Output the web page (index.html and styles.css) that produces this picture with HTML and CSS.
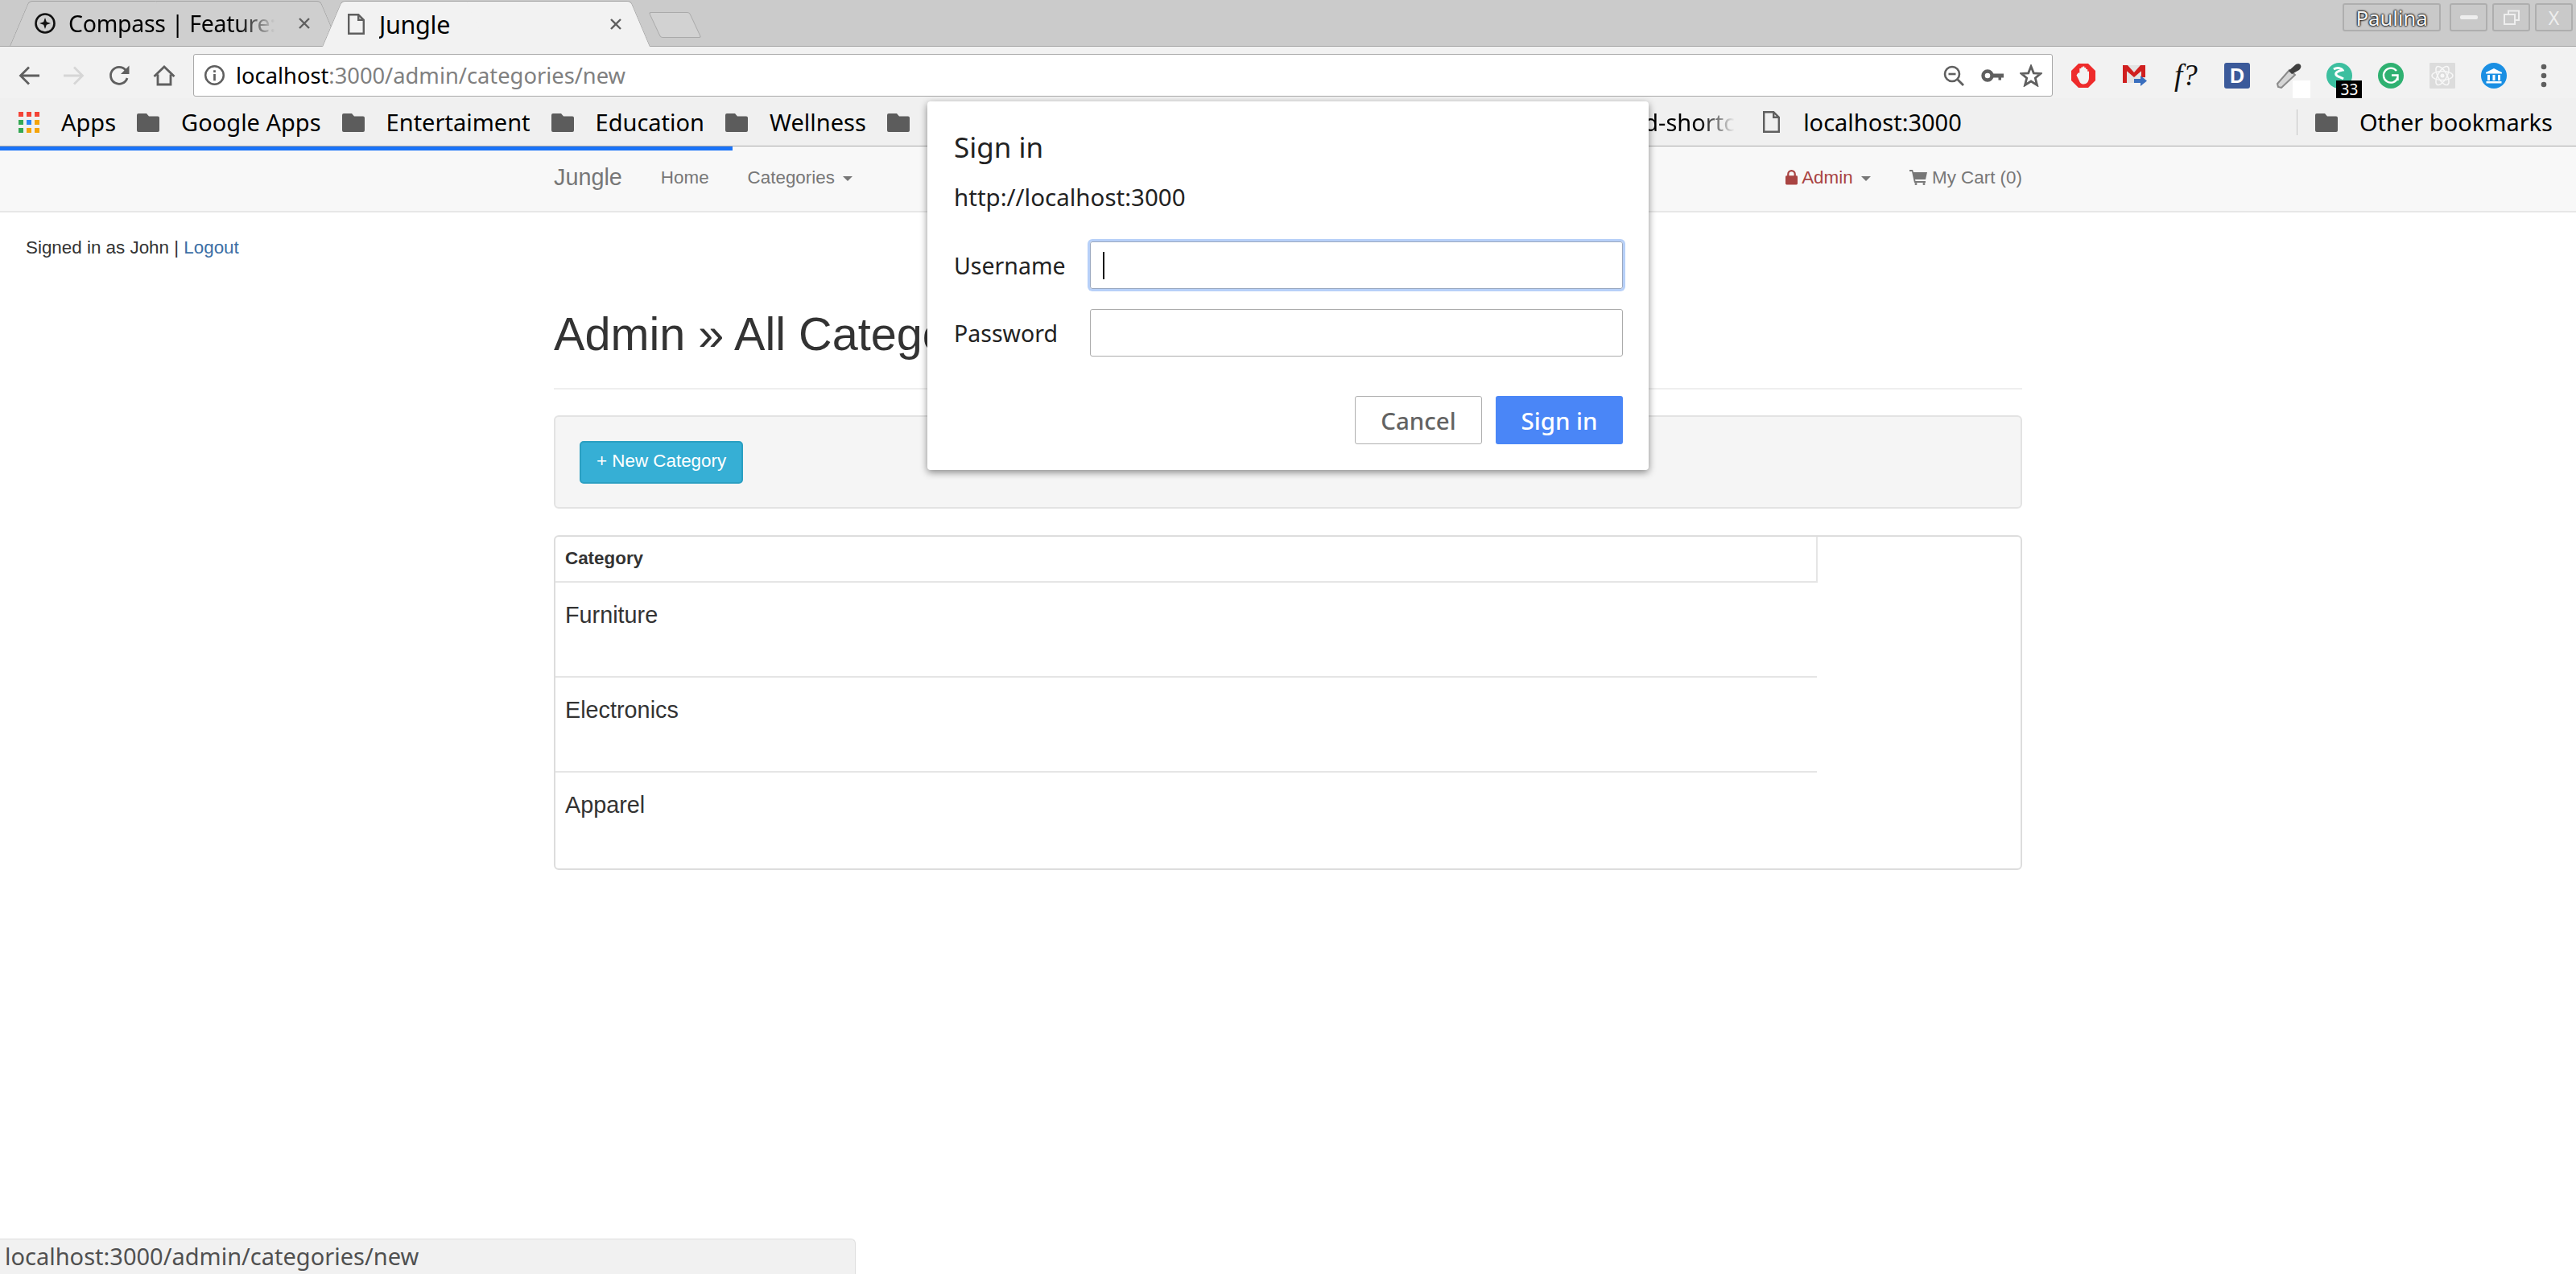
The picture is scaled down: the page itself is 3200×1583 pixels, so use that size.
FILE: index.html
```html
<!DOCTYPE html>
<html lang="en">
    <head>
        <meta charset="UTF-8" />
        <title>Jungle</title>
        <link rel="stylesheet" href="styles.css">
    </head>
    <body>
        <svg class="sprite">
            <symbol id="folder" viewBox="0 0 28 24"><path d="M2 1h10l3 3.500h11a2 2 0 0 1 2 2V22a2 2 0 0 1-2 2H2a2 2 0 0 1-2-2V3a2 2 0 0 1 2-2z" fill="#5c5c5c"/></symbol>
            <symbol id="close" viewBox="0 0 14 14"><path d="M1 1l12 12M13 1L1 13" stroke="#5f5f5f" stroke-width="2.400"/></symbol>
        </svg>

        <div class="tabstrip">
            <div class="tab tab-bg">
                <svg class="tab-icon" viewBox="0 0 26 26"><circle cx="13" cy="13" r="11.500" fill="none" stroke="#111" stroke-width="2.600"/><path d="M13 6l1.800 5.200L20 13l-5.200 1.800L13 20l-1.800-5.200L6 13l5.200-1.800z" fill="#111"/></svg>
                <span class="tab-title tab-fade">Compass | Feature:</span>
                <svg class="tab-close"><use href="#close"/></svg>
            </div>
            <div class="tab tab-active">
                <svg class="tab-icon tab-page" viewBox="0 0 21 26"><path d="M1.200 1.200h12l6.600 6.600v17H1.200z M13.200 1.200v6.600h6.600" fill="none" stroke="#5f5f5f" stroke-width="2.400"/></svg>
                <span class="tab-title tab-title-active">Jungle</span>
                <svg class="tab-close"><use href="#close"/></svg>
            </div>
            <div class="tab-new"></div>
            <div class="window-btns">
                <div class="win-btn win-user">Paulina</div>
                <div class="win-btn win-small"><span class="win-min"></span></div>
                <div class="win-btn win-small"><svg width="22" height="20" viewBox="0 0 22 20"><path d="M7 5V1.500h13V13h-4M2 6h13v12H2z" fill="none" stroke="#eee" stroke-width="2"/></svg></div>
                <div class="win-btn win-small win-x">X</div>
            </div>
        </div>

        <div class="toolbar">
            <svg class="nav-icon" viewBox="0 0 28 28"><path d="M27 14H4M14 3.500L3.500 14 14 24.500" fill="none" stroke="#5f5f5f" stroke-width="2.800"/></svg>
            <svg class="nav-icon" viewBox="0 0 28 28"><path d="M1 14h23M14 3.500L24.500 14 14 24.500" fill="none" stroke="#d6d6d6" stroke-width="2.800"/></svg>
            <svg class="nav-icon" viewBox="0 0 28 28"><path d="M24 17a10.500 10.500 0 1 1-2-10" fill="none" stroke="#5f5f5f" stroke-width="2.800"/><path d="M26.500 1.500V12H16z" fill="#5f5f5f"/></svg>
            <svg class="nav-icon" viewBox="0 0 28 28"><path d="M1.500 15L14 3l12.500 12M6 12.500V25h16V12.500" fill="none" stroke="#5f5f5f" stroke-width="2.800"/></svg>
            <div class="omnibox">
                <svg class="omni-info" viewBox="0 0 28 28"><circle cx="14" cy="14" r="11.700" fill="none" stroke="#5f5f5f" stroke-width="2.600"/><path d="M12.600 7.500h2.800v2.800h-2.800zM12.600 12.500h2.800v8.500h-2.800z" fill="#5f5f5f"/></svg>
                <span class="omni-url">localhost<span class="omni-path">:3000/admin/categories/new</span></span>
                <svg class="omni-icon" viewBox="0 0 28 28"><circle cx="12" cy="12" r="9" fill="none" stroke="#5f5f5f" stroke-width="2.600"/><path d="M7.500 12h9" stroke="#5f5f5f" stroke-width="2.600"/><path d="M18.500 18.500l7.500 7.500" stroke="#5f5f5f" stroke-width="2.800"/></svg>
                <svg class="omni-icon" viewBox="0 0 28 28"><circle cx="8" cy="14" r="5.500" fill="none" stroke="#5f5f5f" stroke-width="4.400"/><path d="M13 11.500h15v5h-3v3h-3.500v-3H13z" fill="#5f5f5f"/></svg>
                <svg class="omni-icon" viewBox="0 0 28 28"><path d="M14 2.500l3.300 8.300 8.700.6-6.700 5.600 2.200 8.700L14 21l-7.500 4.700 2.200-8.700L2 11.400l8.700-.6z" fill="none" stroke="#5f5f5f" stroke-width="2.800"/></svg>
            </div>
            <div class="extensions">
                <svg class="ext" viewBox="0 0 32 32"><path d="M10 1h12l9 9v12l-9 9H10l-9-9V10z" fill="#ee2b2b"/><path d="M9.500 12.500h1.800V7h2V5.500h2V4.500h2V6h2v2h1.800l.4 3 1.500-.5v8c0 5-3 8-6.500 8s-5-2-6-5l-3-6z" fill="#f2f2f2"/></svg>
                <svg class="ext" viewBox="0 0 32 32"><path d="M1 3h28v22H1z" fill="#e3e3e3"/><path d="M1 3h5v22H1zM24 3h5v15h-5zM1 3h6l8 9 8-9h6v3L15 18 1 6z" fill="#d01f1f"/><path d="M15 20h8v-4l8 6.500-8 6.500v-4h-8z" fill="#3a6fbf"/></svg>
                <span class="ext ext-f">f?</span>
                <span class="ext ext-d">D</span>
                <div class="ext ext-dropper">
                    <svg viewBox="0 0 32 32"><path d="M3 30l-1-4L17 9l7 6L7 31z" fill="#d5d5d5" stroke="#8a8a8a" stroke-width="2"/><path d="M20 14l-4-4 9-8c2-1 5-1 6 1s0 4-2 6z" fill="#3f3f3f"/></svg>
                    <span class="dropper-badge"></span>
                </div>
                <div class="ext ext-s">
                    <svg viewBox="0 0 32 32"><circle cx="16" cy="16" r="16" fill="#3cbf9f"/><path d="M9 8c5-3 10-1 11 1-7 1-9 4-8 6s6 3 9 5" fill="none" stroke="#fff" stroke-width="3"/></svg>
                    <span class="count-badge">33</span>
                </div>
                <svg class="ext" viewBox="0 0 32 32"><circle cx="16" cy="16" r="16" fill="#2fb171"/><path d="M23 10a9 9 0 1 0 1.500 8.500M17 15.500h7.500V22" fill="none" stroke="#fff" stroke-width="2.400"/></svg>
                <svg class="ext" viewBox="0 0 32 32"><rect width="32" height="32" rx="1" fill="#dcdcdc"/><g fill="none" stroke="#f7f7f7" stroke-width="1.500"><ellipse cx="16" cy="16" rx="13" ry="5.500"/><ellipse cx="16" cy="16" rx="13" ry="5.500" transform="rotate(60 16 16)"/><ellipse cx="16" cy="16" rx="13" ry="5.500" transform="rotate(120 16 16)"/></g><circle cx="16" cy="16" r="2.500" fill="#f7f7f7"/></svg>
                <svg class="ext" viewBox="0 0 32 32"><circle cx="16" cy="16" r="16" fill="#1a8fe3"/><path d="M16 7l10 5v1.500H6V12zM8 15h3v7H8zM14.500 15h3v7h-3zM21 15h3v7h-3zM6.500 23h19v2.500h-19z" fill="#fff"/></svg>
                <svg class="ext-menu" viewBox="0 0 8 32"><circle cx="4" cy="5" r="3.300" fill="#5f5f5f"/><circle cx="4" cy="16" r="3.300" fill="#5f5f5f"/><circle cx="4" cy="27" r="3.300" fill="#5f5f5f"/></svg>
            </div>
        </div>

        <div class="bookmarks">
            <div class="bm">
                <div class="apps-grid">
                    <i class="c-r"></i><i class="c-r"></i><i class="c-r"></i>
                    <i class="c-g"></i><i class="c-b"></i><i class="c-y"></i>
                    <i class="c-g"></i><i class="c-y"></i><i class="c-y"></i>
                </div>
                <span>Apps</span>
            </div>
            <div class="bm"><svg class="folder"><use href="#folder"/></svg><span>Google Apps</span></div>
            <div class="bm"><svg class="folder"><use href="#folder"/></svg><span>Entertaiment</span></div>
            <div class="bm"><svg class="folder"><use href="#folder"/></svg><span>Education</span></div>
            <div class="bm"><svg class="folder"><use href="#folder"/></svg><span>Wellness</span></div>
            <div class="bm bm-hidden"><svg class="folder"><use href="#folder"/></svg></div>
            <div class="bm bm-cut"><span class="bm-fade">rd-shortc</span></div>
            <div class="bm"><svg class="bm-page" viewBox="0 0 21 27"><path d="M1.200 1.200h12l6.600 6.600v18H1.200z M13.200 1.200v6.600h6.600" fill="none" stroke="#5f5f5f" stroke-width="2.400"/></svg><span>localhost:3000</span></div>
            <div class="bm bm-other"><svg class="folder"><use href="#folder"/></svg><span>Other bookmarks</span></div>
        </div>

        <div class="progress"></div>

        <nav class="navbar">
            <div class="container nav-inner">
                <a class="brand">Jungle</a>
                <a class="nav-link nav-home">Home</a>
                <a class="nav-link">Categories <span class="caret"></span></a>
                <div class="nav-right">
                    <a class="nav-link nav-admin"><svg class="nav-glyph" viewBox="0 0 16 20"><path d="M3.500 9V6a4.500 4.500 0 0 1 9 0v3" fill="none" stroke="#a94442" stroke-width="2.400"/><rect y="8" width="16" height="12" rx="1.500" fill="#a94442"/></svg> Admin <span class="caret"></span></a>
                    <a class="nav-link"><svg class="nav-glyph nav-cart" viewBox="0 0 22 20"><path d="M0 1h4l1 3h17l-2 9H7l.5 2H20v2H6L3 3H0z" fill="#777"/><circle cx="8" cy="18.500" r="1.500" fill="#777"/><circle cx="18" cy="18.500" r="1.500" fill="#777"/></svg> My Cart (0)</a>
                </div>
            </div>
        </nav>

        <p class="signed">Signed in as John | <a class="logout">Logout</a></p>

        <main class="container">
            <h1 class="page-title">Admin » All Categories</h1>
            <div class="well"><a class="btn-info">+ New Category</a></div>
            <div class="panel">
                <table class="cat-table">
                    <thead><tr><th>Category</th></tr></thead>
                    <tbody>
                        <tr><td>Furniture</td></tr>
                        <tr><td>Electronics</td></tr>
                        <tr><td>Apparel</td></tr>
                    </tbody>
                </table>
            </div>
        </main>

        <div class="status">localhost:3000/admin/categories/new</div>

        <div class="dialog">
            <div class="dialog-title">Sign in</div>
            <div class="dialog-origin">http://localhost:3000</div>
            <div class="dialog-row">
                <label class="dialog-label">Username</label>
                <div class="field field-focus"><span class="cursor"></span></div>
            </div>
            <div class="dialog-row">
                <label class="dialog-label">Password</label>
                <div class="field"></div>
            </div>
            <div class="dialog-actions">
                <button class="dlg-btn dlg-cancel">Cancel</button>
                <button class="dlg-btn dlg-ok">Sign in</button>
            </div>
        </div>
    </body>
</html>
```

FILE: styles.css
```css
html,
body {
    margin: 0;
    height: 1583px;
    overflow: hidden;
    background-color: #fff;
}

body {
    font-family: "Liberation Sans", Arial, sans-serif;
    font-size: 22.4px;
    color: #333;
    position: relative;
}

.sprite {
    display: none;
}

/* browser chrome */
.tabstrip {
    height: 57px;
    background-color: #cbcbcb;
    border-bottom: 1px solid #a3a3a3;
    display: flex;
    align-items: flex-end;
    font-family: "Noto Sans", sans-serif;
    color: #000;
    padding-left: 12px;
}

.tab {
    height: 56px;
    display: flex;
    align-items: center;
    box-sizing: border-box;
    position: relative;
    z-index: 1;
    flex: none;
}

/* slanted tab sides */
.tab::before,
.tab::after {
    content: "";
    position: absolute;
    top: 0;
    bottom: 0;
    z-index: -1;
    box-sizing: border-box;
    border-top: 1px solid #a3a3a3;
}

.tab::before {
    left: 0;
    width: 50%;
    border-left: 1px solid #a3a3a3;
    border-top-left-radius: 5px;
    transform-origin: bottom left;
    transform: skewX(-23deg);
}

.tab::after {
    right: 0;
    width: 50%;
    border-right: 1px solid #a3a3a3;
    border-top-right-radius: 5px;
    transform-origin: bottom right;
    transform: skewX(23deg);
}

.tab-bg {
    width: 409px;
    padding: 0 36px 0 31px;
}

.tab-bg::before,
.tab-bg::after {
    background-color: #cfcfcf;
}

.tab-active {
    width: 407px;
    height: 57px;
    margin-left: -21px;
    margin-bottom: -1px;
    padding: 0 35px 0 32px;
    z-index: 2;
}

.tab-active::before,
.tab-active::after {
    background-color: #f2f2f2;
}

.tab-icon {
    width: 26px;
    height: 26px;
    flex: none;
    margin-right: 16px;
}

.tab-page {
    width: 21px;
    margin-right: 18px;
}

.tab-title {
    font-size: 28.500px;
    letter-spacing: -0.3px;
    flex: 1;
    white-space: nowrap;
    overflow: hidden;
}

.tab-title-active {
    font-size: 30.500px;
}

.tab-fade {
    -webkit-mask-image: linear-gradient(to right, #000 78%, transparent 95%);
    mask-image: linear-gradient(to right, #000 78%, transparent 95%);
}

.tab-close {
    width: 14px;
    height: 14px;
    flex: none;
    margin-left: 16px;
}

.tab-new {
    width: 51px;
    height: 32px;
    box-sizing: border-box;
    margin: 0 0 10px 6px;
    background-color: #d2d2d2;
    border: 1px solid #aaa;
    border-radius: 3px;
    transform: skewX(25deg);
}

.window-btns {
    margin-left: auto;
    margin-right: 4px;
    align-self: flex-start;
    margin-top: 4px;
    display: flex;
    gap: 6px;
}

.win-btn {
    height: 35px;
    box-sizing: border-box;
    border: 2px solid #aeaeae;
    border-radius: 3px;
    background-color: #c9c9c9;
    display: flex;
    align-items: center;
    justify-content: center;
    color: #fff;
}

.win-user {
    width: 122px;
    margin-right: 5px;
    font-family: "Noto Sans", sans-serif;
    font-size: 26px;
    letter-spacing: -0.2px;
    color: #f4f4f4;
    text-shadow: 0 0 2px #000, 0 0 2px #000, 0 0 3px #000;
}

.win-small {
    width: 47px;
}

.win-min {
    width: 22px;
    height: 5px;
    background-color: #eee;
    border-radius: 2px;
}

.win-x {
    font-size: 23px;
    color: #eee;
}

.toolbar {
    height: 64px;
    box-sizing: border-box;
    background-color: #f2f2f2;
    display: flex;
    align-items: center;
    padding: 7px 0 0 22px;
    font-family: "Noto Sans", sans-serif;
}

.nav-icon {
    width: 28px;
    height: 28px;
    margin-right: 28px;
    flex: none;
}

.omnibox {
    width: 2310px;
    height: 53px;
    margin-left: -6px;
    box-sizing: border-box;
    background-color: #fff;
    border: 1px solid #a9a9a9;
    border-radius: 3px;
    display: flex;
    align-items: center;
    padding: 0 12px;
    flex: none;
}

.omni-info {
    width: 27px;
    height: 27px;
    margin-right: 13px;
    flex: none;
}

.omni-url {
    font-size: 27.300px;
    color: #000;
    flex: 1;
}

.omni-path {
    color: #808080;
}

.omni-icon {
    width: 28px;
    height: 28px;
    margin-left: 20px;
    flex: none;
}

.extensions {
    display: flex;
    align-items: center;
    margin-left: 22px;
    gap: 31.700px;
}

.ext {
    width: 32px;
    height: 32px;
    flex: none;
    display: block;
}

.ext-f {
    font-family: "Liberation Serif", serif;
    font-style: italic;
    font-size: 37px;
    line-height: 32px;
    color: #111;
    text-align: center;
}

.ext-d {
    background-color: #3b5a9a;
    color: #fff;
    font-family: "Liberation Sans", sans-serif;
    font-weight: bold;
    font-size: 25px;
    line-height: 32px;
    text-align: center;
    border-radius: 3px;
}

.ext-dropper,
.ext-s {
    position: relative;
}

.dropper-badge {
    position: absolute;
    left: 21px;
    top: 22px;
    width: 22px;
    height: 22px;
    background-color: #fff;
}

.count-badge {
    position: absolute;
    left: 12px;
    top: 22px;
    width: 32px;
    height: 22px;
    background-color: #000;
    color: #fff;
    font-size: 19px;
    line-height: 22px;
    text-align: center;
}

.ext-menu {
    width: 8px;
    height: 32px;
    margin-left: 11px;
    flex: none;
}

.bookmarks {
    height: 60px;
    box-sizing: border-box;
    background-color: #f0f0f0;
    border-bottom: 1px solid #a9a9a9;
    display: flex;
    align-items: center;
    padding-left: 23px;
    font-family: "Noto Sans", sans-serif;
    font-size: 29px;
    color: #000;
}

.bm {
    display: flex;
    align-items: center;
    white-space: nowrap;
    margin-right: 26px;
}

.apps-grid {
    display: grid;
    grid-template-columns: repeat(3, 6px);
    grid-auto-rows: 6px;
    gap: 4px;
    margin-right: 27px;
}

.apps-grid i {
    display: block;
}

.c-r {
    background-color: #f44336;
}

.c-g {
    background-color: #34a853;
}

.c-b {
    background-color: #2a85f5;
}

.c-y {
    background-color: #f4a40b;
}

.folder {
    width: 28px;
    height: 24px;
    margin-right: 27px;
    flex: none;
}

.bm-page {
    width: 21px;
    height: 27px;
    margin-right: 29px;
}

.bm-hidden {
    width: 28px;
}

.bm-cut {
    margin-left: 875px;
    margin-right: 35px;
}

.bm-fade {
    -webkit-mask-image: linear-gradient(to right, #000 65%, transparent 100%);
    mask-image: linear-gradient(to right, #000 65%, transparent 100%);
}

.bm-other {
    margin-left: auto;
    margin-right: 29px;
    height: 32px;
    padding-left: 22px;
    border-left: 1px solid #c4c4c4;
}

.progress {
    width: 910px;
    height: 5px;
    margin-bottom: -5px;
    background-color: #1a73f8;
    position: relative;
}

/* page */
.container {
    width: 1824px;
    margin: 0 auto;
}

.navbar {
    height: 82px;
    box-sizing: border-box;
    background-color: #f8f8f8;
    border-bottom: 2px solid #e7e7e7;
}

.nav-inner {
    height: 77px;
    display: flex;
    align-items: center;
}

.brand {
    font-size: 28.800px;
    color: #777;
    margin-right: 48px;
}

.nav-link {
    color: #777;
    font-size: 22.400px;
    white-space: nowrap;
}

.nav-home {
    margin-right: 48px;
}

.nav-right {
    margin-left: auto;
    display: flex;
    gap: 48px;
}

.nav-admin {
    color: #a94442;
}

.nav-glyph {
    width: 15px;
    height: 20px;
    vertical-align: -2px;
}

.nav-cart {
    width: 22px;
}

.caret {
    display: inline-block;
    vertical-align: middle;
    border-top: 6.400px solid #777;
    border-left: 6.400px solid transparent;
    border-right: 6.400px solid transparent;
    margin-left: 4px;
}

.signed {
    margin: 0;
    padding: 28px 32px 0;
    line-height: 32px;
    color: #333;
}

.logout {
    color: #3b6ea5;
}

.page-title {
    margin: 60px 0 32px;
    padding-bottom: 35px;
    font-size: 57.600px;
    font-weight: 500;
    line-height: 63px;
    color: #333;
    border-bottom: 2px solid #eee;
}

.well {
    height: 116px;
    box-sizing: border-box;
    background-color: #f5f5f5;
    border: 2px solid #e3e3e3;
    border-radius: 6px;
    padding: 30px;
    margin-bottom: 33px;
}

.btn-info {
    display: inline-block;
    background-color: #36afd5;
    border: 2px solid #2a9fc2;
    border-radius: 5px;
    color: #fff;
    height: 53px;
    box-sizing: border-box;
    padding: 0 19px;
    line-height: 46px;
}

.panel {
    height: 416px;
    box-sizing: border-box;
    border: 2px solid #ddd;
    border-radius: 6px;
}

.cat-table {
    width: 1568px;
    border-collapse: collapse;
}

.cat-table th {
    font-size: 22.400px;
    font-weight: bold;
    text-align: left;
    height: 56px;
    padding: 0 12px 1px;
    border-right: 2px solid #e5e5e5;
    border-bottom: 2px solid #e5e5e5;
    box-sizing: border-box;
    color: #333;
}

.cat-table td {
    font-size: 28.800px;
    height: 118px;
    box-sizing: border-box;
    padding: 20px 12px 0;
    vertical-align: top;
    border-bottom: 2px solid #e5e5e5;
    line-height: 40px;
}

.cat-table tr:last-child td {
    border-bottom: none;
}

.status {
    position: absolute;
    left: 0;
    bottom: 0;
    width: 1063px;
    height: 44px;
    box-sizing: border-box;
    background-color: #f1f1f1;
    border-top: 1px solid #dedede;
    border-right: 1px solid #dedede;
    border-top-right-radius: 6px;
    font-family: "Noto Sans", sans-serif;
    font-size: 29px;
    line-height: 42px;
    padding-left: 6px;
    color: #505050;
}

/* sign in dialog */
.dialog {
    position: absolute;
    left: 1152px;
    top: 126px;
    width: 896px;
    height: 458px;
    box-sizing: border-box;
    background-color: #fff;
    border-radius: 4px;
    box-shadow: 0 3px 10px rgba(0, 0, 0, 0.45);
    padding: 32px 32px 0 33px;
    font-family: "Noto Sans", sans-serif;
    color: #222;
}

.dialog-title {
    font-size: 35px;
    line-height: 50px;
}

.dialog-origin {
    font-size: 29.500px;
    line-height: 40px;
    margin-top: 17px;
}

.dialog-row {
    display: flex;
    align-items: center;
    margin-top: 25px;
}

.dialog-origin + .dialog-row {
    margin-top: 35px;
}

.dialog-label {
    width: 169px;
    font-size: 28.500px;
    flex: none;
}

.field {
    width: 662px;
    height: 59px;
    box-sizing: border-box;
    border: 1px solid #ababab;
    border-radius: 3px;
    display: flex;
    align-items: center;
    padding-left: 15px;
}

.field-focus {
    box-shadow: 0 0 0 3px #b7d0f8;
    border-color: #9aa8c0;
}

.cursor {
    width: 2px;
    height: 34px;
    background-color: #111;
}

.dialog-actions {
    display: flex;
    justify-content: flex-end;
    gap: 17px;
    margin-top: 49px;
}

.dlg-btn {
    width: 158px;
    height: 60px;
    box-sizing: border-box;
    border-radius: 3px;
    font-family: "Noto Sans", sans-serif;
    font-size: 29.500px;
    font-weight: 500;
}

.dlg-cancel {
    background-color: #fff;
    border: 1px solid #b0b0b0;
    color: #636363;
}

.dlg-ok {
    background-color: #4a86f7;
    border: none;
    color: #fff;
}
```
